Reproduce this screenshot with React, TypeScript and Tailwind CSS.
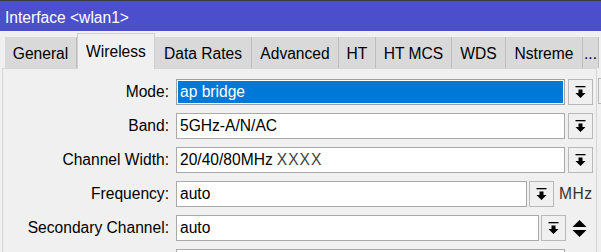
import React from "react";

const Arrow = () => (
  <svg width="11" height="13" viewBox="0 0 11 13" fill="#000">
    <rect x="0.5" y="0" width="10" height="1.3" />
    <path d="M3.5 3.5H7.5V7H10.5L5.5 12L0.5 7H3.5Z" />
  </svg>
);

const UpDown = () => (
  <svg width="15" height="19" viewBox="0 0 15 19" fill="#000">
    <path d="M0.5 8L7.5 1L14.5 8Z" />
    <path d="M0.5 11L14.5 11L7.5 18Z" />
  </svg>
);

const DropBtn = ({ className = "" }: { className?: string }) => (
  <div
    className={
      "w-[25px] h-[26px] shrink-0 border border-[#b9b9b9] bg-[#f0f0f0] flex items-center justify-center " +
      className
    }
  >
    <Arrow />
  </div>
);

const Row = ({ label, children }: { label: string; children: React.ReactNode }) => (
  <div className="flex items-center h-[26px]">
    <div className="w-[166px] text-right leading-[18px] whitespace-nowrap">{label}</div>
    <div className="ml-[7px] flex items-center">{children}</div>
  </div>
);

const Field = ({ w, children }: { w: string; children?: React.ReactNode }) => (
  <div className={"h-[26px] shrink-0 border border-[#a9a9a9] bg-white pl-[3px] flex items-center leading-[18px] whitespace-nowrap " + w}>
    {children}
  </div>
);

const tabs = [
  { name: "General", w: "w-[72px]" },
  { name: "Wireless", w: "w-[78px]", active: true },
  { name: "Data Rates", w: "w-[97px]" },
  { name: "Advanced", w: "w-[87px]" },
  { name: "HT", w: "w-[37px]" },
  { name: "HT MCS", w: "w-[76px]" },
  { name: "WDS", w: "w-[54px]" },
  { name: "Nstreme", w: "w-[77px]" },
  { name: "...", w: "w-[16px]" },
];

export default function App() {
  return (
    <div className="w-[601px] h-[252px] overflow-hidden bg-[#f0f0f0] text-black text-[15.6px] font-['Liberation_Sans',Arial,sans-serif]">
      <div className="h-[31px] border-t border-[#3c3c3c] bg-[#4b4fcc] text-white pl-[5px] pt-[8px] leading-[18px] whitespace-nowrap">
        Interface &lt;wlan1&gt;
      </div>
      <div className="flex">
        <div className="w-[597px] shrink-0">
          <div className="h-[37px] flex items-end pl-[5px] whitespace-nowrap">
            {tabs.map((t) =>
              t.active ? (
                <div
                  key={t.name}
                  className={
                    t.w +
                    " shrink-0 h-[36px] bg-[#f0f0f0] border-l border-r border-t border-[#d0d0d0] text-center pt-[9px] leading-[18px] -mb-[1px] relative z-10"
                  }
                >
                  {t.name}
                </div>
              ) : (
                <div
                  key={t.name}
                  className={
                    t.w +
                    " shrink-0 h-[31px] bg-[#d9d9d9] border-r border-[#bdbdbd] text-center pt-[8px] leading-[18px]"
                  }
                >
                  {t.name}
                </div>
              )
            )}
          </div>
          <div className="ml-[2px] h-[200px] border-l border-t border-r border-[#d6d6d6] pt-[10px] flex flex-col gap-[8px]">
            <Row label="Mode:">
              <div className="h-[26px] w-[389px] shrink-0 border border-[#a0a0a0] bg-white p-[1px]">
                <div className="h-full bg-[#0078d7] text-white pl-[2px] flex items-center leading-[18px]">ap bridge</div>
              </div>
              <DropBtn className="ml-[3px]" />
            </Row>
            <Row label="Band:">
              <Field w="w-[389px]">5GHz-A/N/AC</Field>
              <DropBtn className="ml-[3px]" />
            </Row>
            <Row label="Channel Width:">
              <Field w="w-[389px]">
                20/40/80MHz <span className="ml-[4px] text-[#444] tracking-[1px]">XXXX</span>
              </Field>
              <DropBtn className="ml-[3px]" />
            </Row>
            <Row label="Frequency:">
              <Field w="w-[351px]">auto</Field>
              <DropBtn className="ml-[2px]" />
              <span className="ml-[5px] text-[#333] leading-[18px] tracking-[0.5px]">MHz</span>
            </Row>
            <Row label="Secondary Channel:">
              <Field w="w-[363px]">auto</Field>
              <DropBtn className="ml-[2px]" />
              <div className="ml-[6px] flex items-center">
                <UpDown />
              </div>
            </Row>
            <Row label="">
              <Field w="w-[389px]" />
            </Row>
          </div>
        </div>
        <div className="pt-[47px] pl-[1px]">
          <div className="w-[40px] h-[26px] border border-[#b9b9b9] bg-[#f0f0f0]" />
        </div>
      </div>
    </div>
  );
}
